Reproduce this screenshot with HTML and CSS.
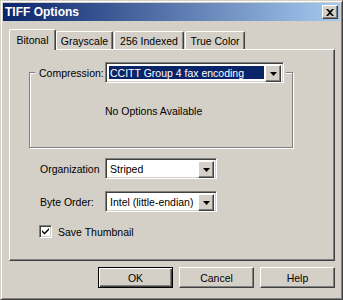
FILE: index.html
```html
<!DOCTYPE html>
<html lang="en">
<head>
    <meta charset="UTF-8">
    <title>TIFF Options</title>
    <link rel="stylesheet" href="styles.css">
</head>
<body>
    <div class="window">
        <div class="titlebar">
            <span class="title">TIFF Options</span>
            <button class="close-btn" aria-label="Close">
                <svg width="8" height="7" viewBox="0 0 8 7"><path d="M0 0h2l2 2 2-2h2L5 3.5 8 7H6L4 5 2 7H0l3-3.5z" fill="#000"/></svg>
            </button>
        </div>
        <div class="content">
            <div class="tabs">
                <div class="tab active tab-bitonal">Bitonal</div>
                <div class="tab tab-gray">Grayscale</div>
                <div class="tab tab-indexed">256 Indexed</div>
                <div class="tab tab-true">True Color</div>
            </div>
            <div class="panel">
                <div class="group">
                    <div class="group-legend">
                        <span class="legend-label">Compression:</span>
                        <div class="combo combo-wide">
                            <div class="combo-value selected">CCITT Group 4 fax encoding</div>
                            <span class="combo-btn"><svg width="7" height="4" viewBox="0 0 7 4"><path d="M0 0h7L3.5 4z" fill="#000"/></svg></span>
                        </div>
                    </div>
                    <div class="group-text">No Options Available</div>
                </div>
                <div class="field-row row-org">
                    <span class="field-label">Organization</span>
                    <div class="combo">
                        <div class="combo-value">Striped</div>
                        <span class="combo-btn"><svg width="7" height="4" viewBox="0 0 7 4"><path d="M0 0h7L3.5 4z" fill="#000"/></svg></span>
                    </div>
                </div>
                <div class="field-row row-byte">
                    <span class="field-label">Byte Order:</span>
                    <div class="combo">
                        <div class="combo-value">Intel (little-endian)</div>
                        <span class="combo-btn"><svg width="7" height="4" viewBox="0 0 7 4"><path d="M0 0h7L3.5 4z" fill="#000"/></svg></span>
                    </div>
                </div>
                <div class="check-row">
                    <span class="checkbox">
                        <svg width="7" height="7" viewBox="0 0 7 7"><path d="M0 2l2.5 2.5L7 0v2L2.5 6.5 0 4z" fill="#000"/></svg>
                    </span>
                    <span class="check-label">Save Thumbnail</span>
                </div>
            </div>
            <div class="buttons">
                <button class="btn default">OK</button>
                <button class="btn">Cancel</button>
                <button class="btn">Help</button>
            </div>
        </div>
    </div>
</body>
</html>
```

FILE: styles.css
```css
* {
    box-sizing: border-box;
}

body {
    margin: 0;
    font-family: "Liberation Sans", Arial, sans-serif;
    font-size: 10.5px;
    color: #000;
    background-color: #d4d0c8;
}

button {
    font: inherit;
    color: inherit;
    margin: 0;
}

.window {
    width: 343px;
    height: 300px;
    background: #d4d0c8;
    border: 1px solid;
    border-color: #d4d0c8 #404040 #404040 #d4d0c8;
    box-shadow: inset 1px 1px 0 #fff, inset -1px -1px 0 #808080;
    padding: 2px;
}

.titlebar {
    height: 18px;
    display: flex;
    align-items: center;
    justify-content: space-between;
    padding: 0 2px;
    background: linear-gradient(to right, #0a246a, #a6caf0);
}

.title {
    color: white;
    font-size: 12px;
    font-weight: bold;
}

.close-btn {
    width: 16px;
    height: 14px;
    padding: 0;
    display: flex;
    align-items: center;
    justify-content: center;
    background: #d4d0c8;
    border: 1px solid;
    border-color: #fff #404040 #404040 #fff;
    box-shadow: inset -1px -1px 0 #808080;
}

.content {
    padding: 8px 5px 0 6px;
}

.tabs {
    display: flex;
    align-items: flex-end;
    height: 20px;
}

.tab {
    height: 18px;
    display: flex;
    align-items: center;
    justify-content: center;
    padding-top: 1px;
    border-top: 1px solid #fff;
    border-left: 1px solid #fff;
    border-right: 1px solid #404040;
    border-radius: 2px 2px 0 0;
    box-shadow: inset -1px 0 0 #808080;
}

.tab.active {
    height: 21px;
    padding-top: 0;
    margin-bottom: -1px;
    position: relative;
    z-index: 1;
    background: #d4d0c8;
}

.tab-bitonal { width: 47px; }
.tab-gray { width: 57px; }
.tab-indexed { width: 70px; margin-left: 1px; }
.tab-true { width: 60px; margin-left: 1px; }

.panel {
    height: 212px;
    border: 1px solid;
    border-color: #fff #404040 #404040 #fff;
    box-shadow: inset -1px -1px 0 #808080;
}

.group {
    position: relative;
    width: 264px;
    height: 76px;
    margin: 22px 0 0 19px;
    padding: 32px 0 0 75px;
    border: 1px solid #808080;
    box-shadow: 1px 1px 0 #fff, inset 1px 1px 0 #fff;
}

.group-legend {
    position: absolute;
    top: -11px;
    left: 5px;
    display: flex;
    align-items: center;
    padding: 0 2px;
    background: #d4d0c8;
}

.legend-label {
    width: 68px;
    padding-left: 2px;
    white-space: nowrap;
}

.group-text {
    line-height: 13px;
}

.combo {
    width: 112px;
    height: 21px;
    display: flex;
    padding: 2px;
    background: white;
    border: 1px solid;
    border-color: #808080 #fff #fff #808080;
    box-shadow: inset 1px 1px 0 #404040, inset -1px -1px 0 #d4d0c8;
}

.combo-wide {
    width: 179px;
}

.combo-value {
    flex: 1;
    padding-left: 2px;
    line-height: 17px;
    white-space: nowrap;
    overflow: hidden;
}

.combo-value.selected {
    margin: 1px;
    padding-left: 1px;
    line-height: 15px;
    color: white;
    background: #0a246a;
}

.combo-btn {
    width: 16px;
    height: 17px;
    display: flex;
    align-items: center;
    justify-content: center;
    background: #d4d0c8;
    border: 1px solid;
    border-color: #fff #404040 #404040 #fff;
    box-shadow: inset -1px -1px 0 #808080;
}

.field-row {
    display: flex;
    align-items: center;
    height: 21px;
    padding-left: 30px;
}

.row-org {
    margin-top: 10px;
}

.row-byte {
    margin-top: 12px;
}

.field-label {
    width: 65px;
}

.check-row {
    display: flex;
    align-items: center;
    height: 13px;
    margin-top: 13px;
    padding-left: 29px;
}

.checkbox {
    width: 13px;
    height: 13px;
    display: flex;
    align-items: center;
    justify-content: center;
    background: white;
    border: 1px solid;
    border-color: #808080 #fff #fff #808080;
    box-shadow: inset 1px 1px 0 #404040, inset -1px -1px 0 #d4d0c8;
}

.check-label {
    margin-left: 6px;
}

.buttons {
    display: flex;
    justify-content: flex-end;
    gap: 6px;
    margin-top: 6px;
}

.btn {
    width: 75px;
    height: 21px;
    padding: 0;
    background: #d4d0c8;
    border: 1px solid;
    border-color: #fff #404040 #404040 #fff;
    box-shadow: inset -1px -1px 0 #808080;
}

.btn.default {
    border-color: #000;
    box-shadow: inset 1px 1px 0 #fff, inset -1px -1px 0 #404040, inset -2px -2px 0 #808080;
}
```
